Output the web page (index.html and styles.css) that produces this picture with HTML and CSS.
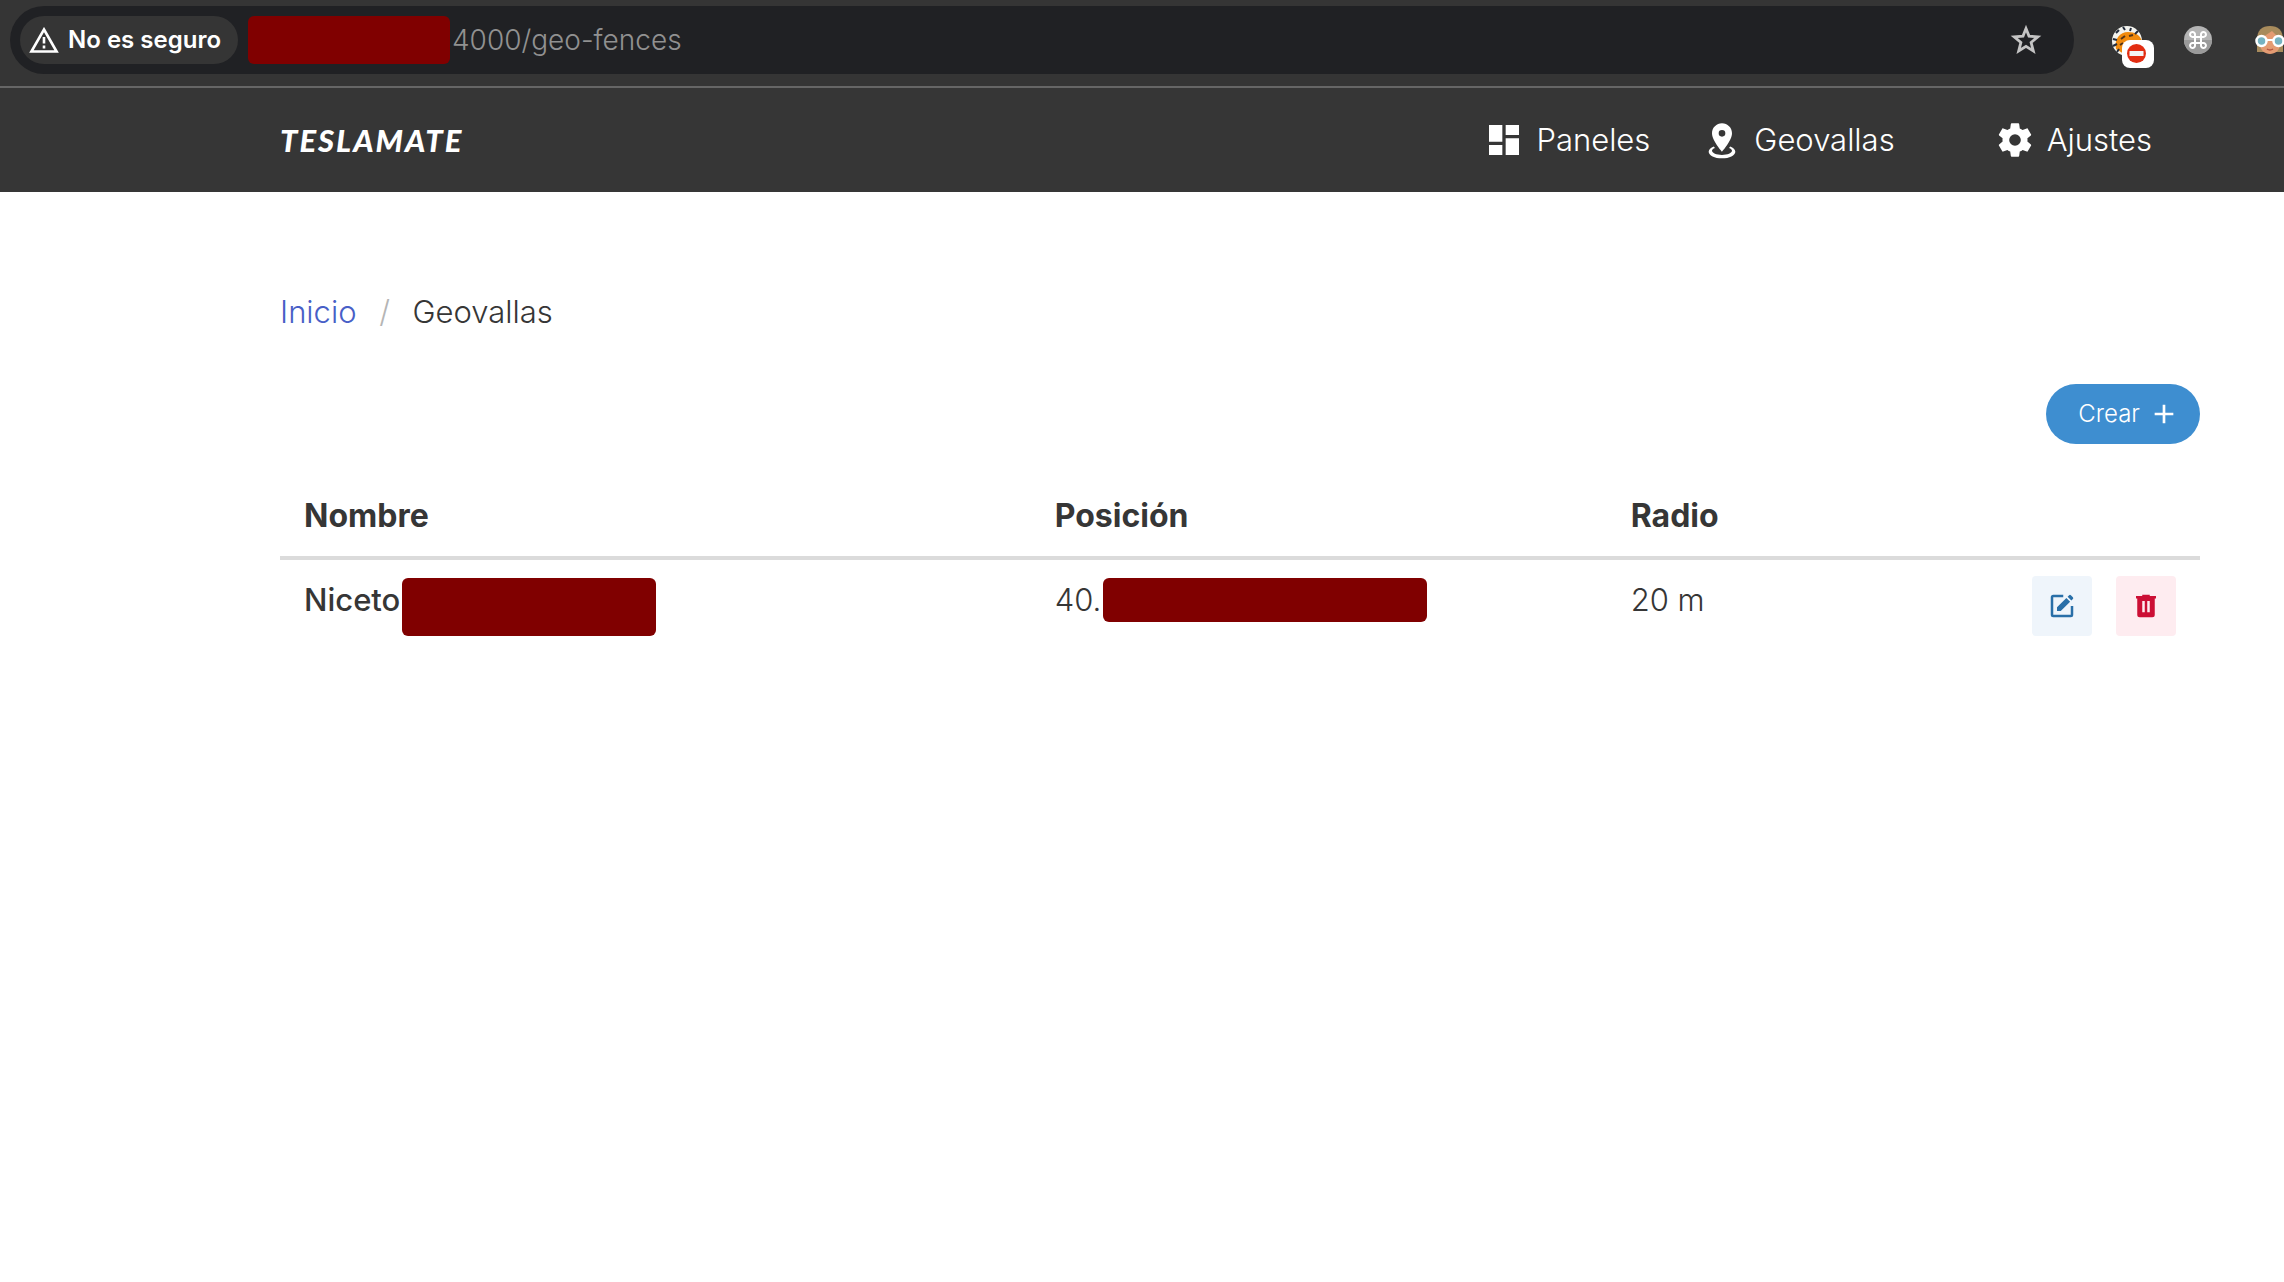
FILE: index.html
```html
<!DOCTYPE html>
<html lang="es">
<head>
<meta charset="utf-8">
<title>Geovallas</title>
<link rel="stylesheet" href="styles.css">
</head>
<body>
<div class="browser-bar">
  <div class="omnibox">
    <button class="security-chip" type="button">
      <svg class="warning-icon" viewBox="0 0 30 26" aria-hidden="true"><path d="M15 2.5 27.6 24.5H2.4Z" fill="none" stroke="#fff" stroke-width="2.6"/><path d="M15 10v6.5M15 18.5v3" stroke="#fff" stroke-width="2.6"/></svg>
      <span>No es seguro</span>
    </button>
    <span class="redaction redaction-host"></span>
    <span class="url">4000/geo-fences</span>
    <button class="star-button" type="button" aria-label="Marcador">
      <svg viewBox="0 0 32 32" aria-hidden="true"><path d="M16 4.5 19 12.1 27.8 12.8 21.1 18.4 23.3 27 16 22.4 8.7 27 10.9 18.4 4.2 12.8 13 12.1Z" fill="none" stroke="#c4c4c4" stroke-width="2.8"/></svg>
    </button>
  </div>
  <div class="extensions">
    <button class="extension blocker" type="button" aria-label="Bloqueador">
      <svg viewBox="0 -14 46 60" aria-hidden="true">
        <circle cx="17" cy="17" r="15" fill="#f3f3ee"/>
        <path d="M6 25C4 15 10 8 18 8c7 0 12 3 14 9l-8 5-10 8Z" fill="#f18a0c"/>
        <path d="M6 9 9 6M13 3l2 3M21 4l-1 3M28 7l-3 3M3 15l4 1M3 22l4-2M7 28l2-3" stroke="#222b3b" stroke-width="2"/>
        <path d="M11 15l4-3M19 12l4-1M10 21l3-2" stroke="#513419" stroke-width="2"/>
        <rect x="12" y="16" width="32" height="28" rx="8" fill="#fff"/>
        <circle cx="26.500" cy="29.500" r="9.500" fill="#e22d12"/>
        <rect x="19.500" y="27" width="14" height="5" fill="#f4f4f4"/>
      </svg>
    </button>
    <button class="extension shortcuts" type="button" aria-label="Atajos">
      <svg viewBox="0 0 28 28" aria-hidden="true"><circle cx="14" cy="14" r="14" fill="#b4b4b4"/><path d="M0 14a14 14 0 0 0 28 0Z" fill="#9a9a9a"/><path d="M11 11h6v6h-6ZM11 11V9a2.500 2.500 0 1 0-2.500 2H11M17 11V9a2.500 2.500 0 1 1 2.500 2H17M11 17v2a2.500 2.500 0 1 1-2.500-2H11M17 17v2a2.500 2.500 0 1 0 2.500-2H17" fill="none" stroke="#fff" stroke-width="2"/></svg>
    </button>
    <button class="extension profile" type="button" aria-label="Perfil">
      <svg viewBox="0 0 30 30" aria-hidden="true"><path d="M2 27V15C2 5 7 1 15 1s13 4 13 14v12Z" fill="#a88b5c"/><path d="M5 14 17 6l8 8v6c0 5-5 9-10 9S5 25 5 20Z" fill="#e49b72"/><path d="M12 24q3 2 6 0" stroke="#b4503c" fill="none" stroke-width="1.500"/><circle cx="6.500" cy="16" r="5" fill="#76b3c2" stroke="#fff" stroke-width="2.500"/><circle cx="23.500" cy="16" r="5" fill="#76b3c2" stroke="#fff" stroke-width="2.500"/><path d="M11 15h8" stroke="#fff" stroke-width="2"/></svg>
    </button>
  </div>
</div>
<header class="navbar">
  <div class="container navbar-inner">
    <a class="brand" href="#">TESLAMATE</a>
    <nav class="menu">
      <a class="menu-item" href="#"><svg viewBox="0 0 24 24" aria-hidden="true"><path d="M13 3v6h8V3m-8 18h8V11h-8M3 21h8v-6H3m0-2h8V3H3z"/></svg>Paneles</a>
      <a class="menu-item" href="#"><svg viewBox="0 0 24 24" aria-hidden="true"><path d="M12 2c3.310 0 6 2.660 6 5.950C18 12.410 12 19 12 19S6 12.410 6 7.950C6 4.660 8.690 2 12 2m0 4a2 2 0 1 0 0 4 2 2 0 0 0 0-4m8 13c0 2.210-3.580 4-8 4s-8-1.790-8-4c0-1.290 1.220-2.440 3.110-3.170l.64.91C6.670 17.190 6 17.810 6 18.500 6 19.880 8.690 21 12 21s6-1.120 6-2.500c0-.69-.67-1.310-1.750-1.760l.64-.91C18.780 16.560 20 17.710 20 19Z"/></svg>Geovallas</a>
      <a class="menu-item menu-item-settings" href="#"><svg viewBox="0 0 24 24" aria-hidden="true"><path d="M12 15.500A3.500 3.500 0 0 1 8.500 12 3.500 3.500 0 0 1 12 8.500a3.500 3.500 0 0 1 3.500 3.500 3.500 3.500 0 0 1-3.500 3.500m7.430-2.530c.04-.32.07-.64.07-.97s-.03-.66-.07-1l2.110-1.630c.19-.15.24-.42.12-.64l-2-3.460c-.12-.22-.39-.31-.61-.22l-2.490 1c-.52-.39-1.060-.73-1.690-.98l-.37-2.650A.506.506 0 0 0 14 2h-4c-.25 0-.46.180-.5.420l-.37 2.650c-.63.250-1.170.590-1.690.980l-2.490-1c-.22-.09-.49 0-.61.220l-2 3.460c-.13.220-.07.490.12.640L4.570 11c-.04.340-.07.670-.07 1s.03.650.07.970l-2.110 1.660c-.19.150-.25.420-.12.640l2 3.460c.12.220.39.300.61.220l2.490-1.010c.52.400 1.060.740 1.690.990l.37 2.650c.04.240.25.420.5.420h4c.25 0 .46-.18.5-.42l.37-2.650c.63-.26 1.170-.59 1.690-.99l2.490 1.010c.22.080.49 0 .61-.22l2-3.460c.12-.22.070-.49-.12-.64z"/></svg>Ajustes</a>
    </nav>
  </div>
</header>
<main class="container content">
  <nav class="breadcrumb" aria-label="Ruta">
    <a href="#">Inicio</a><span class="separator">/</span><span>Geovallas</span>
  </nav>
  <div class="actions">
    <button class="create-button" type="button">Crear<svg viewBox="0 0 24 24" aria-hidden="true"><path d="M19 13h-6v6h-2v-6H5v-2h6V5h2v6h6z"/></svg></button>
  </div>
  <table class="fences">
    <colgroup><col class="col-name"><col class="col-position"><col class="col-radius"><col class="col-actions"></colgroup>
    <thead><tr><th>Nombre</th><th>Posición</th><th>Radio</th><td></td></tr></thead>
    <tbody>
      <tr>
        <td class="name"><div class="masked">Niceto<span class="redaction redaction-name"></span></div></td>
        <td><div class="masked">40.<span class="redaction redaction-position"></span></div></td>
        <td>20 m</td>
        <td><div class="row-buttons">
          <button class="icon-button edit" type="button" aria-label="Editar"><svg viewBox="0 0 24 24" aria-hidden="true"><path d="M21 12v7a2 2 0 0 1-2 2H5a2 2 0 0 1-2-2V5a2 2 0 0 1 2-2h8v2H5v14h14v-7zM8 13l7.500-7.500 3 3L11 16H8zM16.500 4.500l1.200-1.200a1 1 0 0 1 1.400 0l1.600 1.600a1 1 0 0 1 0 1.400l-1.200 1.200z"/></svg></button>
          <button class="icon-button delete" type="button" aria-label="Borrar"><svg viewBox="0 0 24 24" aria-hidden="true"><path fill-rule="evenodd" d="M9 3v1H4v2h1v13a2 2 0 0 0 2 2h10a2 2 0 0 0 2-2V6h1V4h-5V3zM9 8h2v9H9zm4 0h2v9h-2z"/></svg></button>
        </div></td>
      </tr>
    </tbody>
  </table>
</main>
</body>
</html>
```
FILE: styles.css
```css
* { box-sizing: border-box; }
body {
  margin: 0;
  background: #fff;
  color: #363636;
  font-family: Inter, "Liberation Sans", sans-serif;
  font-size: 31px;
  font-weight: 350;
  line-height: 48px;
}
button { border: 0; padding: 0; background: none; color: inherit; font: inherit; cursor: pointer; }
a { color: inherit; text-decoration: none; }
svg { display: block; fill: currentColor; flex: none; }

.browser-bar {
  display: flex;
  align-items: center;
  height: 88px;
  padding: 0 0 6px 10px;
  border-bottom: 2px solid #666;
  background: #353535;
  overflow: hidden;
}
.omnibox {
  display: flex;
  flex: 1;
  align-items: center;
  height: 68px;
  padding: 0 32px 0 10px;
  border-radius: 34px;
  background: #202124;
}
.security-chip {
  display: flex;
  align-items: center;
  gap: 9px;
  width: 218px;
  height: 48px;
  padding-left: 9px;
  border-radius: 24px;
  background: #353535;
  color: #fff;
  font-size: 24px;
  font-weight: 600;
  white-space: nowrap;
}
.warning-icon { width: 30px; height: 26px; }
.redaction { display: block; flex: none; border-radius: 6px; background: #800000; }
.redaction-host { width: 202px; height: 48px; margin-left: 10px; }
.url { margin-left: 2px; color: #919191; font-size: 28px; }
.star-button { margin-left: auto; }
.star-button svg { width: 32px; height: 32px; }
.extensions { display: flex; align-items: center; margin-left: 36px; margin-right: -2px; }
.blocker svg { width: 46px; height: 60px; }
.shortcuts { margin: 0 42px 0 28px; }
.shortcuts svg { width: 28px; height: 28px; }
.profile svg { width: 32px; height: 30px; }

.container { padding: 0 84px 0 280px; }
.navbar { background: #363636; color: #fff; }
.navbar-inner { display: flex; align-items: center; justify-content: space-between; height: 104px; }
.brand { font-family: Lato, sans-serif; font-size: 31px; font-style: italic; font-weight: 900; letter-spacing: 2px; }
.menu { display: flex; gap: 52px; padding-right: 48px; }
.menu-item { display: flex; align-items: center; gap: 12px; }
.menu-item svg { width: 40px; height: 40px; }
.menu-item-settings { margin-left: 48px; }

.content { padding-top: 96px; }
.breadcrumb { display: flex; }
.breadcrumb a { color: #485fc7; }
.separator { width: 56px; color: #b5b5b5; text-align: center; }
.actions { display: flex; justify-content: flex-end; margin-top: 48px; }
.create-button {
  display: flex;
  align-items: center;
  gap: 8px;
  height: 60px;
  padding: 0 20px 0 32px;
  border-radius: 30px;
  background: #3e8ed0;
  color: #fff;
  font-size: 24px;
}
.create-button svg { width: 32px; height: 32px; }

.fences { width: 100%; margin-top: 32px; border-collapse: collapse; table-layout: fixed; }
.col-name { width: 39.1%; }
.col-position { width: 30%; }
.col-radius { width: 16%; }
.fences th, .fences td { padding: 16px 24px; text-align: left; vertical-align: top; }
.fences th { font-size: 32px; font-weight: 650; }
.fences td { font-weight: 300; }
.fences thead tr { border-bottom: 4px solid #dbdbdb; }
.fences .name { font-weight: 450; }
.masked { display: flex; gap: 2px; height: 48px; white-space: nowrap; }
.redaction-name { width: 254px; height: 58px; margin-top: 2px; }
.redaction-position { width: 324px; height: 44px; margin-top: 2px; }
.row-buttons { display: flex; justify-content: flex-end; gap: 24px; }
.icon-button { display: grid; place-items: center; width: 60px; height: 60px; border-radius: 4px; }
.icon-button svg { width: 30px; height: 30px; }
.edit { background: #eff5fb; color: #296fa8; }
.delete { background: #feecf0; color: #cc0f35; }
```
